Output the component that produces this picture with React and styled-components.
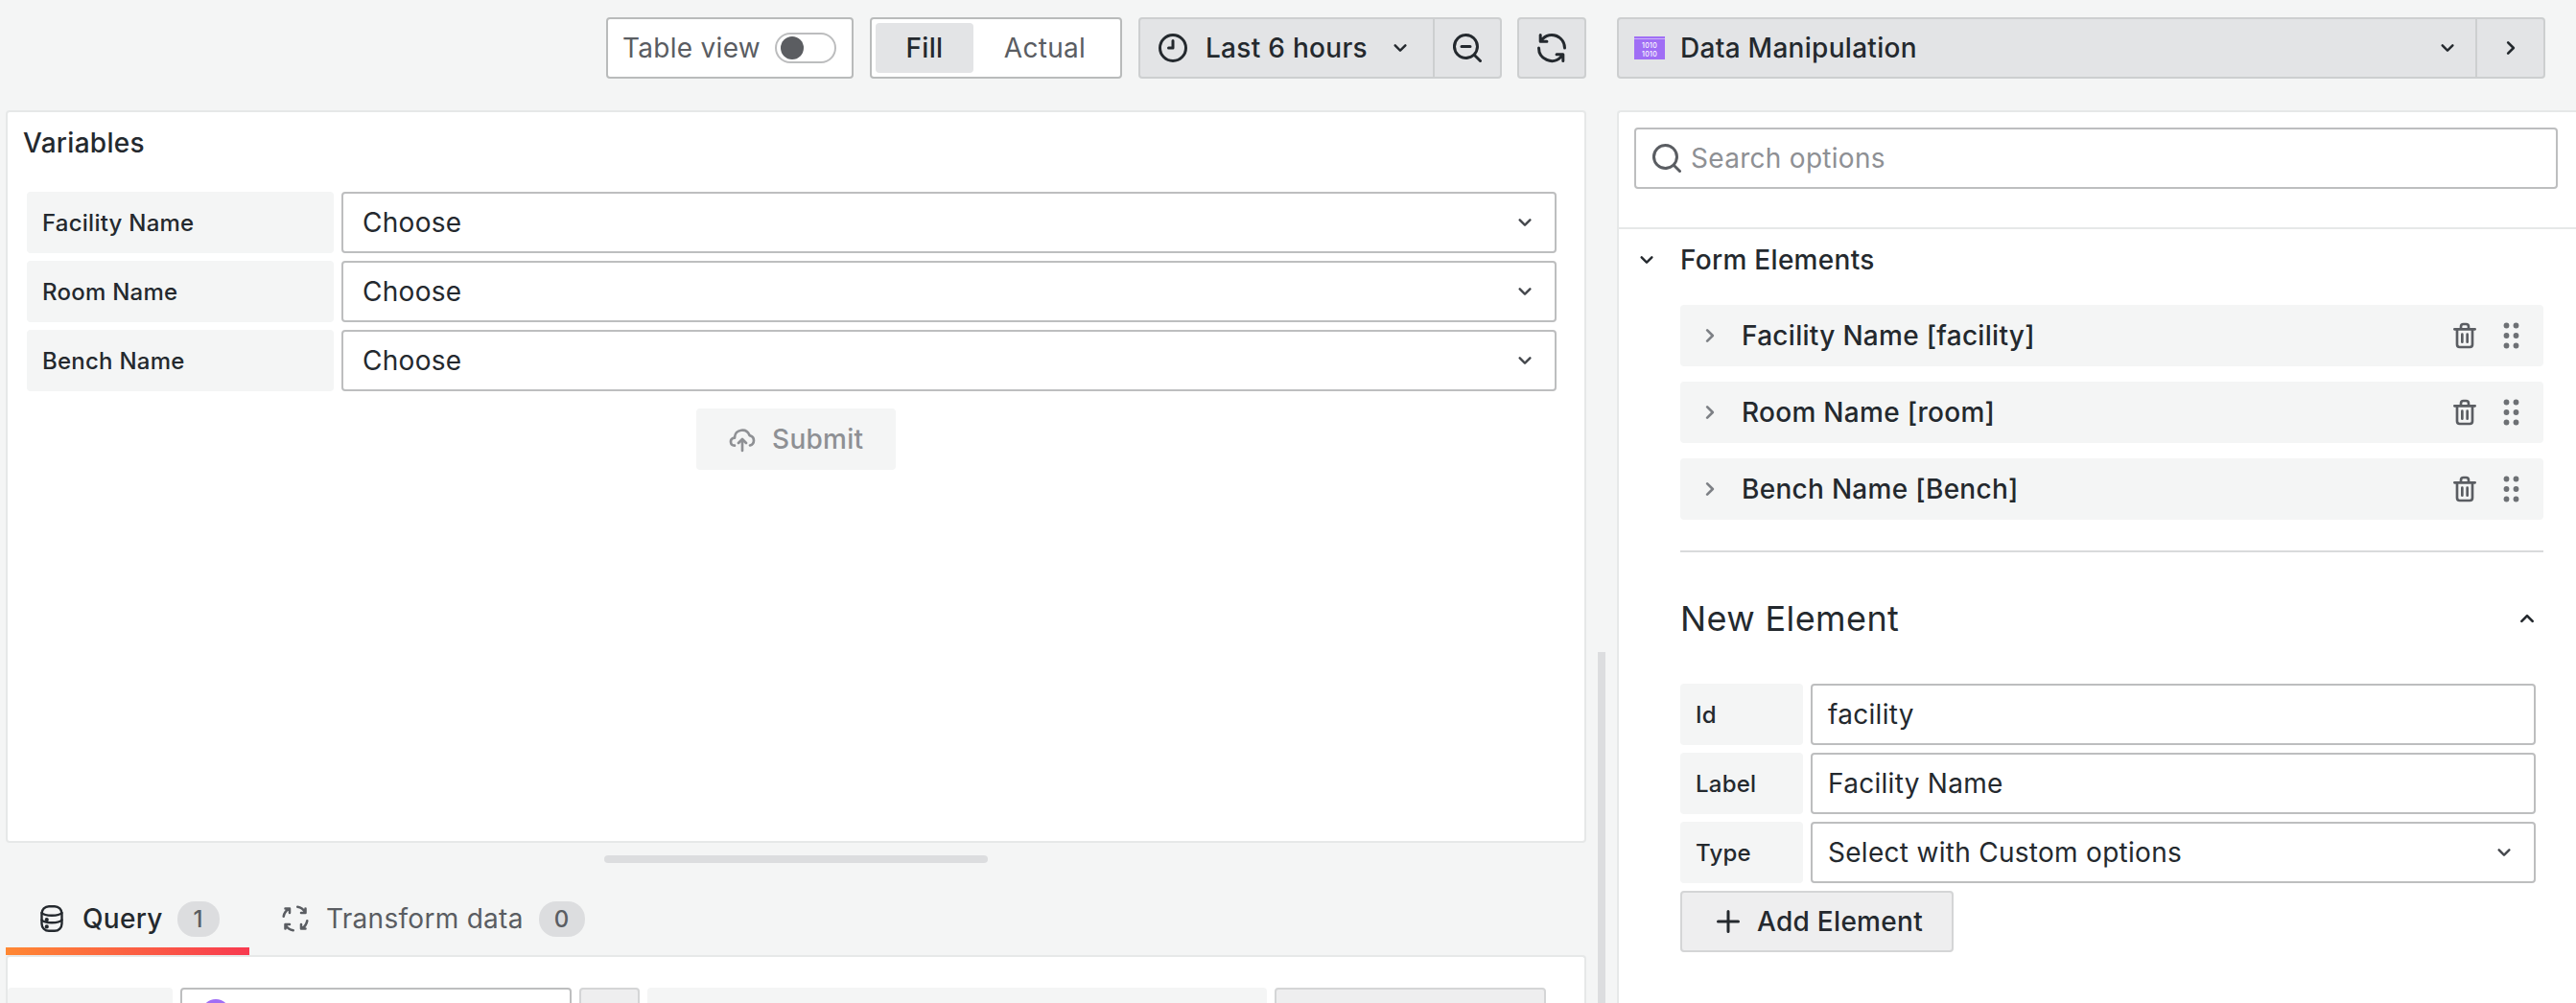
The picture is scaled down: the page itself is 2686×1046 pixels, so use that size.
import React from 'react'
import styled, { createGlobalStyle } from 'styled-components'

const GlobalStyle = createGlobalStyle`
  html, body { margin: 0; padding: 0; height: 100%; overflow: hidden; background: #f4f5f5; }
  body { font-family: Inter, "Noto Sans", sans-serif; color: #24292e; letter-spacing: 0.018em; }
  * { box-sizing: border-box; }
`

const Svg = styled.svg`
  display: block;
  flex: none;
  width: ${p => p.$size || 32}px;
  height: ${p => p.$size || 32}px;
  fill: ${p => p.$color || 'currentColor'};
`

const LineSvg = styled.svg`
  display: block;
  flex: none;
  width: 36px;
  height: 36px;
  fill: none;
  stroke: currentColor;
  stroke-linecap: round;
  stroke-linejoin: round;
`

const DotsSvg = styled.svg`
  display: block;
  flex: none;
  width: 17px;
  height: 28px;
  fill: #6d7074;
`

const LogoSvg = styled.svg`
  display: block;
  flex: none;
  width: 32px;
  height: 24px;
`

const paths = {
  down: 'M17,9.17a1,1,0,0,0-1.41,0L12,12.71,8.46,9.17a1,1,0,0,0-1.41,0,1,1,0,0,0,0,1.42l4.24,4.24a1,1,0,0,0,1.42,0L17,10.59A1,1,0,0,0,17,9.17Z',
  right: 'M14.83,11.29,10.59,7.05a1,1,0,0,0-1.42,0,1,1,0,0,0,0,1.41L12.71,12,9.17,15.54a1,1,0,0,0,0,1.41,1,1,0,0,0,.71.29,1,1,0,0,0,.71-.29l4.24-4.24A1,1,0,0,0,14.83,11.29Z',
  up: 'M17,13.41,12.71,9.17a1,1,0,0,0-1.42,0L7.05,13.41a1,1,0,0,0,0,1.42,1,1,0,0,0,1.41,0L12,11.29l3.54,3.54a1,1,0,0,0,.7.29,1,1,0,0,0,.71-.29A1,1,0,0,0,17,13.41Z',
  search: 'M21.71,20.29,18,16.61A9,9,0,1,0,16.61,18l3.68,3.68a1,1,0,0,0,1.42,0A1,1,0,0,0,21.71,20.29ZM11,18a7,7,0,1,1,7-7A7,7,0,0,1,11,18Z',
  zoomOut: 'M21.71,20.29,18,16.61A9,9,0,1,0,16.61,18l3.68,3.68a1,1,0,0,0,1.42,0A1,1,0,0,0,21.71,20.29ZM11,18a7,7,0,1,1,7-7A7,7,0,0,1,11,18ZM14,10H8a1,1,0,0,0,0,2h6a1,1,0,0,0,0-2Z',
  clock: 'M12,2A10,10,0,1,0,22,12,10,10,0,0,0,12,2Zm0,18a8,8,0,1,1,8-8A8,8,0,0,1,12,20Zm0-14a1,1,0,0,0-1,1v4H9a1,1,0,0,0,0,2h3a1,1,0,0,0,1-1V7A1,1,0,0,0,12,6Z',
  sync: 'M19.91,15.51H15.38a1,1,0,0,0,0,2h2.4A8,8,0,0,1,4,12a1,1,0,0,0-2,0,10,10,0,0,0,16.88,7.23V21a1,1,0,0,0,2,0V16.5A1,1,0,0,0,19.91,15.51ZM12,2A10,10,0,0,0,5.12,4.77V3a1,1,0,0,0-2,0V7.5a1,1,0,0,0,1,1h4.5a1,1,0,0,0,0-2H6.22A8,8,0,0,1,20,12a1,1,0,0,0,2,0A10,10,0,0,0,12,2Z',
  trash: 'M10,18a1,1,0,0,0,1-1V11a1,1,0,0,0-2,0v6A1,1,0,0,0,10,18ZM20,6H16V5a3,3,0,0,0-3-3H11A3,3,0,0,0,8,5V6H4A1,1,0,0,0,4,8H5V19a3,3,0,0,0,3,3h8a3,3,0,0,0,3-3V8h1a1,1,0,0,0,0-2ZM10,5a1,1,0,0,1,1-1h2a1,1,0,0,1,1,1V6H10Zm7,14a1,1,0,0,1-1,1H8a1,1,0,0,1-1-1V8H17Zm-3-1a1,1,0,0,0,1-1V11a1,1,0,0,0-2,0v6A1,1,0,0,0,14,18Z',
  plus: 'M19,11H13V5a1,1,0,0,0-2,0v6H5a1,1,0,0,0,0,2h6v6a1,1,0,0,0,2,0V13h6a1,1,0,0,0,0-2Z',
  upload: 'M12.71,11.29a1,1,0,0,0-1.42,0l-3,3a1,1,0,0,0,1.42,1.42L11,14.41V21a1,1,0,0,0,2,0V14.41l1.29,1.3a1,1,0,0,0,1.42-1.42ZM18.42,8.22A7,7,0,0,0,5.06,10.11,4,4,0,0,0,6,18a1,1,0,0,0,0-2,2,2,0,0,1,0-4,1,1,0,0,0,1-1,5,5,0,0,1,9.73-1.61,1,1,0,0,0,.78.67,3,3,0,0,1,.24,5.84,1,1,0,1,0,.5,1.94,5,5,0,0,0,.17-9.62Z',
}

const Icon = ({ name, size, color }) => (
  <Svg viewBox="0 0 24 24" $size={size} $color={color}><path d={paths[name]} /></Svg>
)

const DatabaseIcon = () => (
  <LineSvg viewBox="0 0 24 24" strokeWidth="1.6">
    <rect x="5" y="3.500" width="14" height="17" rx="5" />
    <path d="M5 8c2 2.400 12 2.400 14 0M5 13c2 2.400 12 2.400 14 0" />
    <circle cx="8.500" cy="12.800" r=".6" fill="currentColor" />
    <circle cx="8.500" cy="17.600" r=".6" fill="currentColor" />
  </LineSvg>
)

const ProcessIcon = () => (
  <LineSvg viewBox="0 0 24 24" strokeWidth="1.7">
    <path d="M3.800 10.500c.4-2.200 1.700-4.100 3.500-5.200M8 8V5H5" />
    <path d="M13.500 3.800c2.200.4 4.100 1.700 5.200 3.500M16 8h3V5" />
    <path d="M20.200 13.500c-.4 2.200-1.700 4.100-3.500 5.200M16 16v3h3" />
    <path d="M10.500 20.200c-2.200-.4-4.100-1.700-5.200-3.500M8 16H5v3" />
  </LineSvg>
)

const DotsIcon = () => (
  <DotsSvg viewBox="0 0 17 28">
    {[3.500, 14, 24.500].map(y => [3.500, 13.500].map(x => <circle key={`${x}-${y}`} cx={x} cy={y} r="2.900" />))}
  </DotsSvg>
)

const DataIcon = () => (
  <LogoSvg viewBox="0 0 32 24">
    <rect width="32" height="24" fill="#a06ef5" />
    <rect y="2" width="32" height=".8" fill="#d9c6fb" />
    <text x="16" y="11.500" textAnchor="middle" fontSize="7" fontFamily="Inter, sans-serif" fill="#fff">1010</text>
    <text x="16" y="20.500" textAnchor="middle" fontSize="7" fontFamily="Inter, sans-serif" fill="#fff">1010</text>
  </LogoSvg>
)

const Page = styled.div`
  width: 2686px;
  height: 1046px;
  overflow: hidden;
  background: #f4f5f5;
`

const TopBar = styled.div`
  display: flex;
  justify-content: flex-end;
  height: 64px;
  margin-top: 18px;
  padding-right: 32px;
`

const ToolGroup = styled.div`
  display: flex;
  gap: 17px;
  margin-right: 32px;
`

const ToolBox = styled.div`
  display: flex;
  align-items: center;
  height: 64px;
  width: ${p => p.$width}px;
  padding: ${p => p.$padding || 0};
  background: #fff;
  border: 2px solid #b9bbbb;
  border-radius: 4px;
`

const ToolLabel = styled.span`
  font-size: 28px;
  color: #5a5d62;
  white-space: nowrap;
`

const Toggle = styled.span`
  flex: none;
  display: flex;
  align-items: center;
  width: 64px;
  height: 32px;
  margin-left: 15px;
  padding-left: 4px;
  border: 2px solid #bcbdbe;
  border-radius: 16px;
`

const Knob = styled.span`
  width: 24px;
  height: 24px;
  border-radius: 50%;
  background: #5b5d61;
`

const Segment = styled.span`
  display: flex;
  align-items: center;
  justify-content: center;
  height: 52px;
  width: ${p => p.$width}px;
  font-size: 28px;
  font-weight: ${p => (p.$active ? 500 : 400)};
  color: ${p => (p.$active ? '#24292e' : '#5a5d62')};
  background: ${p => (p.$active ? '#e3e4e6' : '#fff')};
  border-radius: 4px;
`

const GreyButton = styled.div`
  display: flex;
  align-items: center;
  height: 64px;
  width: ${p => p.$width}px;
  flex: ${p => (p.$grow ? 1 : 'none')};
  padding: ${p => p.$padding || 0};
  justify-content: ${p => (p.$center ? 'center' : 'flex-start')};
  background: #e3e4e6;
  border: 2px solid #cdcfd0;
  border-radius: ${p => p.$radius || '4px'};
  font-size: 28px;
  font-weight: 500;
  margin-left: ${p => p.$pull || 0}px;
`

const ButtonPair = styled.div`
  display: flex;
`

const PickerPair = styled(ButtonPair)`
  width: 968px;
`

const ButtonText = styled.span`
  margin-left: ${p => p.$left || 0}px;
  flex: ${p => (p.$grow ? 1 : 'none')};
  white-space: nowrap;
`

const Main = styled.div`
  display: flex;
  margin-top: 33px;
  height: 931px;
`

const LeftColumn = styled.div`
  flex: none;
  width: 1648px;
  margin-left: 6px;
  display: flex;
  flex-direction: column;
`

const VizPanel = styled.section`
  height: 764px;
  flex: none;
  background: #fff;
  border: 2px solid #e6e8e8;
  border-radius: 4px;
`

const PanelTitle = styled.h2`
  margin: 0;
  height: 62px;
  padding: 15px 0 0 16px;
  font-size: 28px;
  line-height: 34px;
  font-weight: 500;
`

const VariableForm = styled.div`
  display: flex;
  flex-direction: column;
  gap: 8px;
  margin-top: 21px;
  padding: 0 29px 0 20px;
`

const FormRow = styled.div`
  display: flex;
  gap: 8px;
  height: 64px;
`

const RowLabel = styled.div`
  flex: none;
  width: ${p => p.$width}px;
  display: flex;
  align-items: center;
  padding-left: 16px;
  background: #f4f5f5;
  border-radius: 4px;
  font-size: 24px;
  font-weight: 500;
  letter-spacing: 0.01em;
`

const Field = styled.div`
  flex: 1;
  display: flex;
  align-items: center;
  justify-content: space-between;
  min-width: 0;
  padding: 0 16px 0 ${p => p.$left || 16}px;
  background: #fff;
  border: 2px solid #bdbebf;
  border-radius: 4px;
  font-size: 28px;
`

const SubmitRow = styled.div`
  display: flex;
  justify-content: center;
  margin-top: 18px;
`

const SubmitButton = styled.div`
  display: flex;
  align-items: center;
  gap: 15px;
  height: 64px;
  width: 208px;
  padding-left: 32px;
  background: #f4f5f5;
  border-radius: 4px;
  color: #8e9094;
  font-size: 28px;
  font-weight: 500;
`

const Handle = styled.div`
  flex: none;
  align-self: center;
  width: 400px;
  height: 8px;
  margin-top: 13px;
  background: #dcdddf;
  border-radius: 4px;
`

const Tabs = styled.div`
  flex: none;
  display: flex;
  height: 96px;
  align-items: flex-end;
`

const Tab = styled.div`
  display: flex;
  align-items: center;
  height: 64px;
  padding: 0 0 4px ${p => p.$left}px;
  width: ${p => p.$width}px;
  font-size: 28px;
  font-weight: ${p => (p.$active ? 500 : 400)};
  color: ${p => (p.$active ? '#24292e' : '#5a5d62')};
  border-bottom: 8px solid transparent;
  border-image: ${p => (p.$active ? 'linear-gradient(90deg, #ff8833, #f83a50) 1' : 'none')};
`

const Counter = styled.span`
  margin-left: ${p => p.$left || 16}px;
  min-width: 44px;
  height: 37px;
  padding: 0 16px;
  display: flex;
  align-items: center;
  justify-content: center;
  background: #dcdddf;
  border-radius: 18px;
  color: #5a5d62;
  font-size: 24px;
  font-weight: 500;
`

const QueryPanel = styled.section`
  flex: 1;
  overflow: hidden;
  background: #fff;
  border: 2px solid #e6e8e8;
  border-bottom: 0;
  border-radius: 4px 4px 0 0;
`

const QueryRow = styled.div`
  display: flex;
  gap: 8px;
  margin-top: 32px;
  padding-right: 40px;
  height: 64px;
`

const QueryLabel = styled.div`
  flex: ${p => (p.$grow ? 1 : 'none')};
  width: ${p => p.$width}px;
  background: #f4f5f5;
  border-radius: 4px;
`

const QuerySelect = styled.div`
  flex: none;
  width: 408px;
  display: flex;
  padding: 10px 0 0 20px;
  border: 2px solid #bdbebf;
  border-radius: 4px;
`

const SourceDot = styled.span`
  width: 30px;
  height: 30px;
  border-radius: 50%;
  background: #a06ef5;
`

const QueryButton = styled.div`
  flex: none;
  width: ${p => p.$width}px;
  background: #eeeeef;
  border: 2px solid #d4d5d6;
  border-radius: 4px;
`

const ScrollThumb = styled.div`
  flex: none;
  width: 8px;
  margin: 565px 12px 0 12px;
  background: #dcdddf;
`

const OptionsPane = styled.aside`
  flex: 1;
  background: #fff;
  border: solid #e6e8e8;
  border-width: 2px 0 0 2px;
  border-radius: 4px 0 0 0;
`

const SearchWrap = styled.div`
  height: 122px;
  padding: 16px 19px 0 16px;
  border-bottom: 2px solid #e6e8e8;
`

const SearchBox = styled.div`
  display: flex;
  align-items: center;
  gap: 7px;
  height: 64px;
  padding-left: 14px;
  border: 2px solid #bdbebf;
  border-radius: 4px;
  color: #5a5d62;
`

const Placeholder = styled.span`
  font-size: 28px;
  color: #8e9094;
`

const SectionHeader = styled.div`
  display: flex;
  align-items: center;
  height: 64px;
  margin-bottom: 15px;
  padding-left: 14px;
  font-size: 28px;
  font-weight: 500;
`

const OptionsBody = styled.div`
  padding: 0 34px 0 64px;
`

const ElementList = styled.div`
  display: flex;
  flex-direction: column;
  gap: 16px;
`

const ElementItem = styled.div`
  display: flex;
  align-items: center;
  height: 64px;
  padding: 0 25px 0 15px;
  background: #f4f5f5;
  border-radius: 4px;
  font-size: 28px;
  font-weight: 500;
`

const ElementName = styled.span`
  flex: 1;
  margin-left: 17px;
`

const TrashSlot = styled.span`
  margin-right: 24px;
  color: #5a5d62;
`

const Divider = styled.hr`
  margin: 32px 0 0;
  border: 0;
  height: 2px;
  background: #d9dadb;
`

const NewElementHeader = styled.div`
  display: flex;
  align-items: center;
  justify-content: space-between;
  height: 137px;
  font-size: 36px;
  letter-spacing: 0.01071em;
  padding-right: 1px;
`

const NewElementForm = styled.div`
  display: flex;
  flex-direction: column;
  gap: 8px;
  margin-right: 8px;
`

const AddButton = styled.div`
  display: flex;
  align-items: center;
  width: 285px;
  height: 64px;
  padding-left: 30px;
  background: #eeeeef;
  border: 2px solid #d4d5d6;
  border-radius: 4px;
  font-size: 28px;
  font-weight: 500;
`

const Select = ({ left, children }) => (
  <Field $left={left}>
    <span>{children}</span>
    <Icon name="down" size={30} color="#45484d" />
  </Field>
)

const App = () => (
  <Page>
    <GlobalStyle />
    <TopBar>
      <ToolGroup>
        <ToolBox $width={258} $padding="0 0 0 15px">
          <ToolLabel>Table view</ToolLabel>
          <Toggle><Knob /></Toggle>
        </ToolBox>
        <ToolBox $width={263} $padding="0 4px">
          <Segment $active $width={102}>Fill</Segment>
          <Segment $width={149}>Actual</Segment>
        </ToolBox>
        <ButtonPair>
          <GreyButton $width={309} $radius="4px 0 0 4px" $padding="0 0 0 16px">
            <Icon name="clock" size={36} />
            <ButtonText $left={16}>Last 6 hours</ButtonText>
            <ButtonText $left={19}><Icon name="down" size={30} /></ButtonText>
          </GreyButton>
          <GreyButton $pull={-2} $width={72} $center $radius="0 4px 4px 0">
            <Icon name="zoomOut" size={36} />
          </GreyButton>
        </ButtonPair>
        <GreyButton $pull={-1} $width={72} $center><Icon name="sync" size={36} /></GreyButton>
      </ToolGroup>
      <PickerPair>
        <GreyButton $grow $radius="4px 0 0 4px" $padding="0 14px 0 16px">
          <DataIcon />
          <ButtonText $left={16} $grow>Data Manipulation</ButtonText>
          <Icon name="down" size={30} />
        </GreyButton>
        <GreyButton $pull={-2} $width={73} $center $radius="0 4px 4px 0">
          <Icon name="right" size={32} />
        </GreyButton>
      </PickerPair>
    </TopBar>
    <Main>
      <LeftColumn>
        <VizPanel>
          <PanelTitle>Variables</PanelTitle>
          <VariableForm>
            {['Facility Name', 'Room Name', 'Bench Name'].map(name => (
              <FormRow key={name}>
                <RowLabel $width={320}>{name}</RowLabel>
                <Select left={20}>Choose</Select>
              </FormRow>
            ))}
          </VariableForm>
          <SubmitRow>
            <SubmitButton><Icon name="upload" size={32} />Submit</SubmitButton>
          </SubmitRow>
        </VizPanel>
        <Handle />
        <Tabs>
          <Tab $active $left={30} $width={254}>
            <DatabaseIcon />
            <ButtonText $left={14}>Query</ButtonText>
            <Counter $left={15}>1</Counter>
          </Tab>
          <Tab $left={30} $width={380}>
            <ProcessIcon />
            <ButtonText $left={14}>Transform data</ButtonText>
            <Counter>0</Counter>
          </Tab>
        </Tabs>
        <QueryPanel>
          <QueryRow>
            <QueryLabel $width={172} />
            <QuerySelect><SourceDot /></QuerySelect>
            <QueryButton $width={63} />
            <QueryLabel $grow />
            <QueryButton $width={283} />
          </QueryRow>
        </QueryPanel>
      </LeftColumn>
      <ScrollThumb />
      <OptionsPane>
        <SearchWrap>
          <SearchBox>
            <Icon name="search" size={36} />
            <Placeholder>Search options</Placeholder>
          </SearchBox>
        </SearchWrap>
        <SectionHeader>
          <Icon name="down" size={30} />
          <ButtonText $left={20}>Form Elements</ButtonText>
        </SectionHeader>
        <OptionsBody>
          <ElementList>
            {['Facility Name [facility]', 'Room Name [room]', 'Bench Name [Bench]'].map(name => (
              <ElementItem key={name}>
                <Icon name="right" size={32} color="#7d8085" />
                <ElementName>{name}</ElementName>
                <TrashSlot><Icon name="trash" size={32} /></TrashSlot>
                <DotsIcon />
              </ElementItem>
            ))}
          </ElementList>
          <Divider />
          <NewElementHeader>
            <span>New Element</span>
            <Icon name="up" size={32} />
          </NewElementHeader>
          <NewElementForm>
            <FormRow>
              <RowLabel $width={128}>Id</RowLabel>
              <Field>facility</Field>
            </FormRow>
            <FormRow>
              <RowLabel $width={128}>Label</RowLabel>
              <Field>Facility Name</Field>
            </FormRow>
            <FormRow>
              <RowLabel $width={128}>Type</RowLabel>
              <Select>Select with Custom options</Select>
            </FormRow>
            <AddButton>
              <Icon name="plus" size={36} />
              <ButtonText $left={12}>Add Element</ButtonText>
            </AddButton>
          </NewElementForm>
        </OptionsBody>
      </OptionsPane>
    </Main>
  </Page>
)

export default App
